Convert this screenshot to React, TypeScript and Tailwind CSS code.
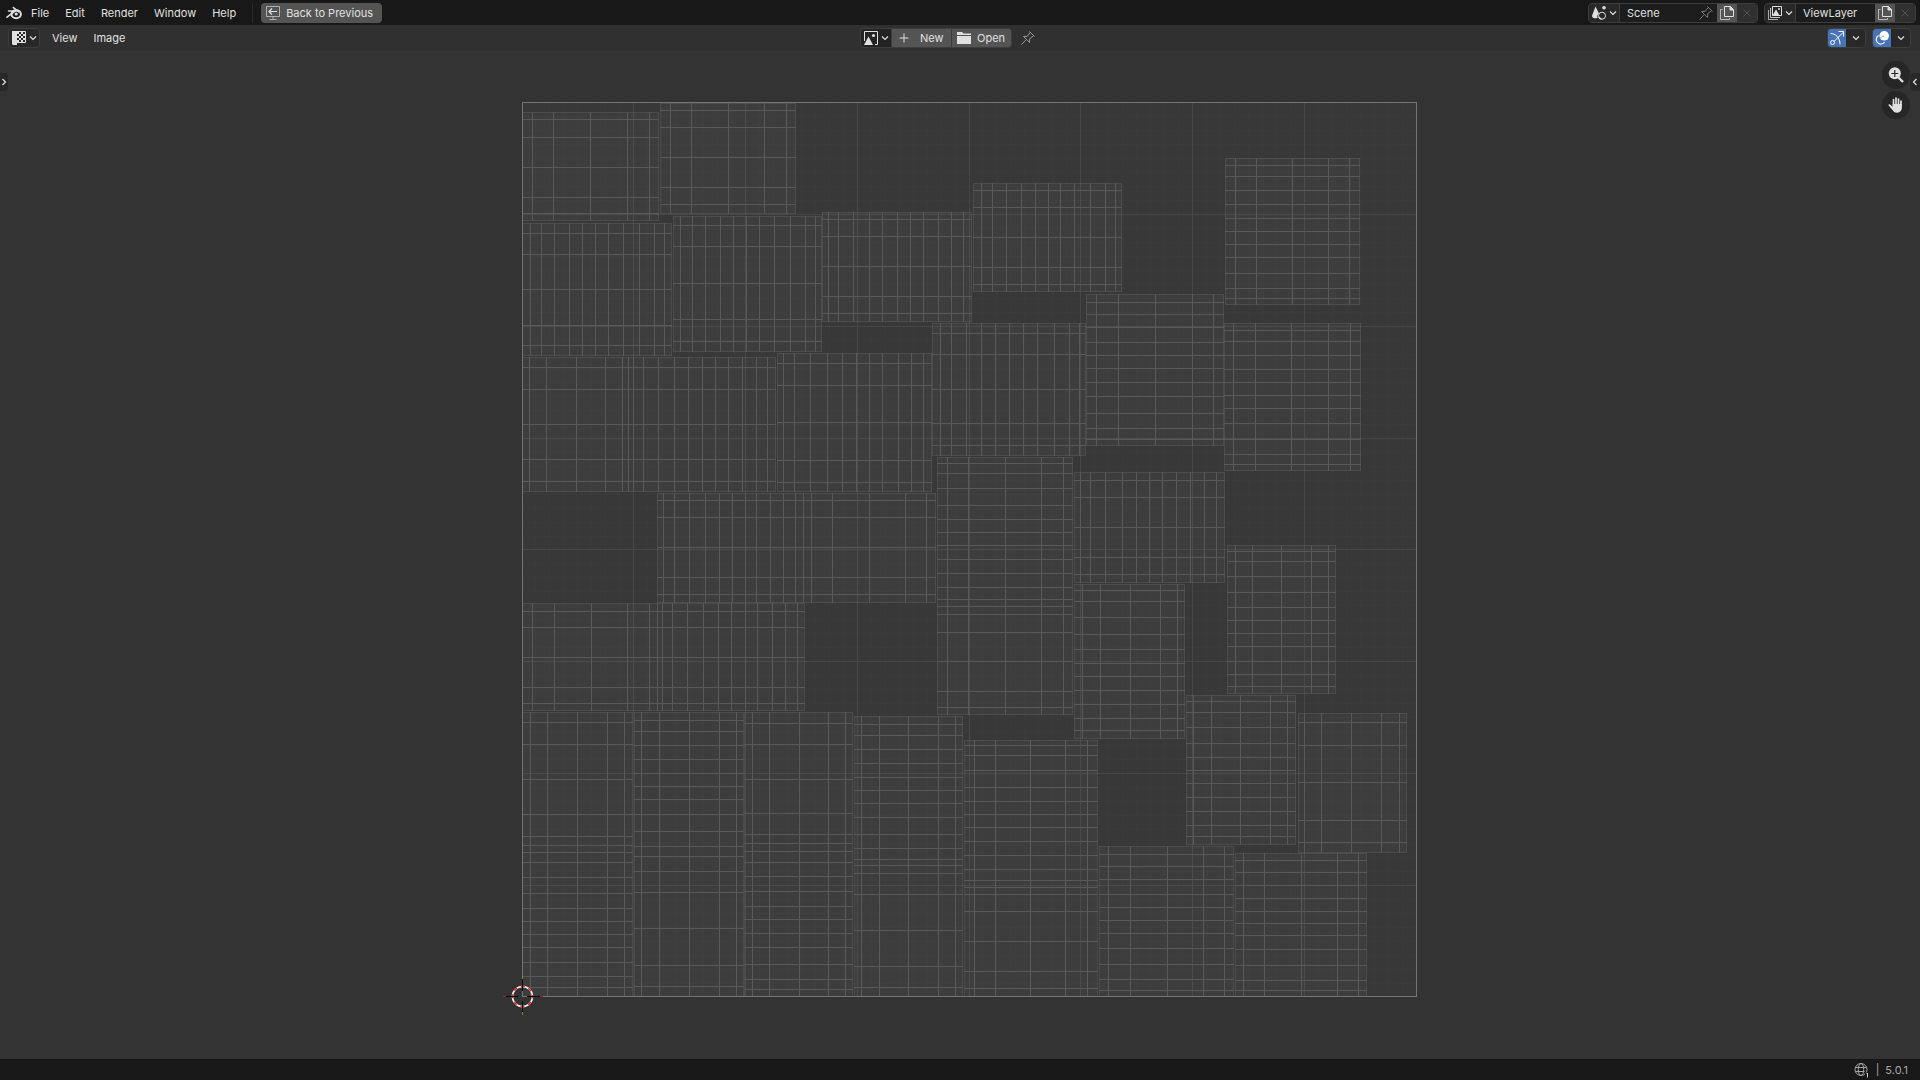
import React from "react";

type Island = {
  box: [number, number, number, number];
  xs: number[];
  ys: number[];
};

// box is left, top, right, bottom; xs and ys are the inner edge loops
const islands: Island[] = [
  { box: [522, 112, 658, 220], xs: [532, 553, 590, 627, 649], ys: [119, 137, 167, 197, 213] },
  { box: [660, 103, 795, 213], xs: [670, 691, 728, 764, 786], ys: [110, 127, 157, 187, 204] },
  { box: [522, 223, 671, 355], xs: [530, 541, 554, 569, 582, 595, 608, 623, 639, 654, 664], ys: [233, 254, 289, 325, 345] },
  { box: [673, 216, 821, 351], xs: [680, 692, 705, 720, 733, 746, 759, 774, 790, 805, 815], ys: [225, 246, 283, 319, 341] },
  { box: [822, 212, 971, 321], xs: [828, 838, 853, 869, 882, 897, 910, 923, 938, 951, 963], ys: [219, 236, 266, 296, 313] },
  { box: [973, 183, 1121, 291], xs: [981, 992, 1006, 1021, 1035, 1048, 1060, 1074, 1090, 1105, 1115], ys: [190, 207, 237, 267, 284] },
  { box: [1225, 158, 1359, 304], xs: [1235, 1256, 1292, 1328, 1349], ys: [165, 176, 190, 204, 218, 231, 244, 257, 273, 288, 298] },
  { box: [1086, 294, 1223, 445], xs: [1096, 1118, 1155, 1192, 1213], ys: [302, 314, 327, 342, 355, 368, 382, 396, 413, 428, 439] },
  { box: [1224, 323, 1360, 470], xs: [1233, 1255, 1291, 1328, 1350], ys: [330, 341, 355, 369, 382, 395, 408, 423, 439, 454, 464] },
  { box: [932, 323, 1085, 455], xs: [940, 951, 966, 981, 995, 1009, 1023, 1037, 1054, 1069, 1079], ys: [333, 354, 389, 423, 445] },
  { box: [937, 457, 1072, 714], xs: [947, 968, 1005, 1041, 1063], ys: [463, 473, 488, 505, 519, 532, 545, 559, 573, 587, 599, 606, 614, 632, 661, 691, 707] },
  { box: [1074, 472, 1224, 582], xs: [1080, 1090, 1105, 1122, 1136, 1149, 1162, 1176, 1190, 1204, 1216], ys: [480, 497, 527, 557, 574] },
  { box: [1074, 584, 1184, 738], xs: [1082, 1100, 1130, 1160, 1177], ys: [590, 601, 617, 634, 649, 663, 676, 690, 704, 718, 730] },
  { box: [1227, 545, 1335, 693], xs: [1235, 1252, 1281, 1311, 1328], ys: [551, 561, 576, 592, 607, 620, 633, 646, 661, 674, 686] },
  { box: [1186, 695, 1295, 844], xs: [1193, 1211, 1240, 1270, 1287], ys: [701, 712, 727, 743, 757, 770, 783, 797, 811, 825, 836] },
  { box: [1298, 713, 1406, 852], xs: [1304, 1321, 1351, 1381, 1399], ys: [722, 745, 782, 820, 842] },
  { box: [522, 357, 775, 491], xs: [529, 546, 576, 605, 622, 628, 633, 643, 658, 674, 688, 702, 715, 728, 742, 756, 767], ys: [367, 389, 424, 459, 481] },
  { box: [777, 353, 931, 491], xs: [783, 794, 810, 827, 842, 856, 869, 882, 898, 911, 923], ys: [363, 385, 422, 460, 482] },
  { box: [657, 493, 935, 602], xs: [663, 674, 689, 705, 719, 732, 745, 756, 770, 783, 795, 803, 811, 832, 869, 905, 926], ys: [500, 517, 547, 577, 594] },
  { box: [522, 603, 804, 710], xs: [532, 554, 591, 627, 649, 657, 662, 672, 687, 703, 718, 731, 745, 757, 772, 785, 797], ys: [611, 627, 657, 687, 703] },
  { box: [522, 712, 632, 996], xs: [530, 547, 577, 607, 624], ys: [722, 744, 779, 814, 836, 845, 852, 862, 877, 893, 908, 921, 934, 947, 962, 976, 987] },
  { box: [634, 712, 743, 996], xs: [641, 659, 689, 719, 736], ys: [720, 731, 745, 759, 773, 786, 799, 814, 831, 846, 856, 871, 892, 928, 965, 986] },
  { box: [744, 712, 852, 996], xs: [752, 769, 799, 828, 845], ys: [723, 744, 779, 813, 834, 843, 851, 862, 876, 891, 906, 919, 933, 947, 964, 979, 989] },
  { box: [854, 716, 962, 996], xs: [861, 879, 908, 938, 955], ys: [724, 735, 749, 763, 777, 790, 803, 817, 834, 848, 859, 865, 873, 894, 930, 966, 987] },
  { box: [964, 740, 1097, 996], xs: [974, 995, 1030, 1065, 1087], ys: [745, 755, 770, 787, 801, 814, 827, 841, 855, 869, 880, 887, 894, 911, 941, 971, 988] },
  { box: [1099, 846, 1233, 996], xs: [1108, 1130, 1167, 1203, 1224], ys: [854, 866, 879, 894, 907, 920, 933, 948, 964, 979, 990] },
  { box: [1235, 853, 1366, 996], xs: [1243, 1264, 1301, 1337, 1358], ys: [860, 872, 885, 898, 911, 923, 935, 949, 965, 980, 990] },
];

const LEFT = 522;
const TOP = 102;
const SIZE = 894;

const gridPath = (parts: number, skip: number) => {
  let d = "";
  for (let i = 1; i < parts; i++) {
    if (skip && i % skip === 0) continue;
    const step = (SIZE / parts) * i;
    d += `M${LEFT + Math.floor(step) + 0.5} ${TOP}v${SIZE}`;
    d += `M${LEFT} ${TOP + Math.ceil(step) + 0.5}h${SIZE}`;
  }
  return d;
};

const loopPath = ({ box, xs, ys }: Island) => {
  const [l, t, r, b] = box;
  return (
    xs.map((x) => `M${x + 0.5} ${t}V${b + 1}`).join("") +
    ys.map((y) => `M${l} ${y + 0.5}H${r + 1}`).join("")
  );
};

const UVCanvas = () => (
  <svg
    className="block h-full w-full"
    viewBox="0 51 1920 1008"
    role="img"
    aria-label="UV layout"
  >
    <rect x={LEFT} y={TOP} width={SIZE} height={SIZE} fill="#383838" />
    <g fill="none" shapeRendering="crispEdges">
      {islands.map(({ box: [l, t, r, b] }, i) => (
        <rect
          key={i}
          x={l + 0.5}
          y={t + 0.5}
          width={r - l}
          height={b - t}
          fill="#3d3d3d"
          stroke="#4c4c4c"
        />
      ))}
      <path d={gridPath(64, 8)} stroke="#fff" strokeOpacity="0.012" />
      <path d={gridPath(8, 0)} stroke="#fff" strokeOpacity="0.075" />
      <path d={islands.map(loopPath).join("")} stroke="#595959" />
      <rect x={LEFT + 0.5} y={TOP + 0.5} width={SIZE} height={SIZE} stroke="#747474" />
    </g>
    <g fill="none">
      <circle cx="522.5" cy="996.5" r="10" stroke="#f4f4f4" strokeWidth="1.6" />
      <circle
        cx="522.5"
        cy="996.5"
        r="10"
        stroke="#e0242e"
        strokeWidth="1.6"
        strokeDasharray="3.93 3.93"
        strokeDashoffset="2"
      />
      <path d="M506 996.5h12M527 996.5h13M522.5 979v12M522.5 1001v11" stroke="#000" />
      <path d="M503 996.5h3M540 996.5h3" stroke="#a3222c" />
      <path d="M522.5 976v3M522.5 1012v3" stroke="#7d9130" />
    </g>
  </svg>
);

const Icon = ({ children, className = "" }: { children: React.ReactNode; className?: string }) => (
  <svg
    className={`h-[14px] w-[14px] shrink-0 ${className}`}
    viewBox="1 1 14 14"
    fill="none"
    stroke="currentColor"
    aria-hidden="true"
  >
    {children}
  </svg>
);

const LargeIcon = ({ children }: { children: React.ReactNode }) => (
  <svg className="h-4 w-4 shrink-0" viewBox="0 0 16 16" fill="none" stroke="currentColor" aria-hidden="true">
    {children}
  </svg>
);

const Chevron = () => (
  <svg className="h-2 w-2 shrink-0" viewBox="0 0 8 8" fill="none" stroke="currentColor" aria-hidden="true">
    <path d="M1 2.5l3 3 3-3" strokeWidth="1.2" />
  </svg>
);

const BlenderLogo = () => (
  <LargeIcon>
    <ellipse cx="10.2" cy="9.2" rx="4.7" ry="4" strokeWidth="2" />
    <circle cx="10.2" cy="9" r="1.6" fill="currentColor" stroke="none" />
    <path d="M1 12.2L9.6 5.6M2.6 6h7.6M7.4 2.6l5.4 4.2" strokeWidth="1.6" strokeLinecap="round" />
  </LargeIcon>
);

const BackIcon = () => (
  <Icon>
    <path d="M1.5 1.5h13v10h-13zM8 11.5v2.5M4.5 14.5h7" strokeOpacity="0.65" />
    <path d="M12 6.5H4M7 3.5l-3 3 3 3" strokeWidth="1.2" />
  </Icon>
);

const ImageEditorIcon = () => (
  <Icon>
    <path d="M1 1h5v14H2.500A1.500 1.500 0 0 1 1 13.500z" fill="currentColor" stroke="none" />
    <path d="M6 1.5h8.500v11H6" />
    <path
      d="M6 2h2v2H6zM10 2h2v2h-2zM8 4h2v2H8zM12 4h2v2h-2zM6 6h2v2H6zM10 6h2v2h-2zM8 8h2v2H8zM12 8h2v2h-2zM6 10h2v2H6zM10 10h2v2h-2z"
      fill="currentColor"
      stroke="none"
    />
  </Icon>
);

const PictureIcon = () => (
  <Icon>
    <path d="M1.500 11V1.500h13v13H12" />
    <path d="M1 15l4.500-8.500L10 15z" fill="currentColor" stroke="none" />
    <circle cx="10.500" cy="5.500" r="1.500" fill="currentColor" stroke="none" />
  </Icon>
);

const PinIcon = () => (
  <Icon>
    <path d="M9.500 1.500l5 5M10.300 2.300L7.300 6.300 3.500 6.500l6 6 .2-3.800 4-3M6.300 9.500L1.500 14.500" />
  </Icon>
);

const CopyIcon = () => (
  <Icon>
    <path d="M5.500 1.500h6l3 3v7h-9z" />
    <path d="M11 1.500V5h3.500z" fill="currentColor" />
    <path d="M3.500 4.500h-2v10h9v-1.500" strokeOpacity="0.7" />
  </Icon>
);

const CloseIcon = () => (
  <Icon className="text-[#505050]">
    <path d="M4.500 4.500l7 7M11.500 4.500l-7 7" />
  </Icon>
);

const SceneIcon = () => (
  <Icon>
    <path d="M4.500 1.500L8 8.500c-1.500 1-2 2.500-1.500 4.600C3.500 13.800 1 13 1 10.800z" fill="currentColor" stroke="none" />
    <circle cx="13" cy="2.800" r="1.800" fill="currentColor" stroke="none" />
    <circle cx="11" cy="10.700" r="3.500" />
    <path d="M8 12a3 3 0 0 0 2.500 2" strokeWidth="1.500" />
  </Icon>
);

const ViewLayerIcon = () => (
  <Icon>
    <path d="M5.500 1.500h9v9h-9z" />
    <path d="M5.500 10.500l3.500-6 3.500 6z" fill="currentColor" stroke="none" />
    <circle cx="12" cy="4" r="1" fill="currentColor" stroke="none" />
    <path d="M3.500 3v9.500H13" strokeOpacity="0.85" />
    <path d="M1.500 5v9.500H11" strokeOpacity="0.7" />
  </Icon>
);

const GizmoIcon = () => (
  <Icon>
    <path d="M1.500 3.500c5 0 9.500 4 9.500 11" />
    <path d="M5 11.500L14 2.500M9.500 1.500h5v5" />
    <circle cx="3.500" cy="12.500" r="2" />
  </Icon>
);

const OverlayIcon = () => (
  <Icon>
    <circle cx="10.200" cy="5.800" r="4.800" fill="currentColor" stroke="none" />
    <path d="M4.500 5.500a4.600 4.600 0 1 0 6.200 6.500" strokeWidth="1.200" />
    <path d="M6 10.500a4.600 4.600 0 0 1 3-4.500l1.500 1" stroke="#4772b3" strokeDasharray="1.500 1" />
  </Icon>
);

const ZoomIcon = () => (
  <LargeIcon>
    <circle cx="6.800" cy="6.300" r="6" fill="currentColor" stroke="none" />
    <path d="M10.500 10.500l4.500 4.500" strokeWidth="2.400" />
    <path d="M6.800 3v7M3.300 6.500h7" stroke="#262626" strokeWidth="1.200" />
  </LargeIcon>
);

const HandIcon = () => (
  <LargeIcon>
    <path d="M5.500 8V2.500M8 7.500V1M10.500 7.500V2M13 8.500V4" strokeWidth="1.700" strokeLinecap="round" />
    <path
      d="M4.600 7h9.300v3.500c0 3-2 5.200-4.800 5.200-2.300 0-3.600-1-4.800-2.900L.6 8.600c-.4-.9.900-1.700 1.700-.9l2.300 2.100z"
      fill="currentColor"
      stroke="none"
    />
  </LargeIcon>
);

const GlobeIcon = () => (
  <LargeIcon>
    <circle cx="7" cy="7.500" r="6" />
    <ellipse cx="7" cy="7.500" rx="2.700" ry="6" />
    <path d="M1.500 5.500h11M1.500 9.500h9" />
    <path d="M11 10.500h5V16h-5z" fill="#181818" stroke="none" />
    <path d="M12.500 12l1-1v4.500" stroke="#d0d0d0" />
  </LargeIcon>
);

const menus = ["File", "Edit", "Render", "Window", "Help"];

const DataBlock = ({
  label,
  value,
  icon,
  pin,
}: {
  label: string;
  value: string;
  icon: React.ReactNode;
  pin?: boolean;
}) => (
  <div className="flex h-5 items-stretch overflow-hidden rounded border border-[#3d3d3d] bg-[#1d1d1d]">
    <button
      type="button"
      aria-label={`Browse ${label}`}
      className="flex w-[31px] items-center justify-center gap-[3px] border-r border-[#3d3d3d] bg-[#282828]"
    >
      {icon}
      <Chevron />
    </button>
    <input
      aria-label={label}
      defaultValue={value}
      className="w-[79px] bg-transparent pl-[7px] outline-none"
    />
    {pin && (
      <button type="button" aria-label="Pin scene" className="mr-1 flex items-center text-[#7a7a7a]">
        <PinIcon />
      </button>
    )}
    <button type="button" aria-label={`New ${label}`} className="flex w-5 items-center justify-center bg-[#545454]">
      <CopyIcon />
    </button>
    <button type="button" aria-label={`Remove ${label}`} className="flex w-5 items-center justify-center bg-[#303030]">
      <CloseIcon />
    </button>
  </div>
);

const ToggleGroup = ({ label, icon }: { label: string; icon: React.ReactNode }) => (
  <div className="flex h-5 items-stretch overflow-hidden rounded border border-[#3d3d3d] bg-[#282828]">
    <button type="button" aria-pressed="true" aria-label={label} className="flex w-[18px] items-center justify-center bg-[#4772b3] text-white">
      {icon}
    </button>
    <button type="button" aria-label={`${label} options`} className="flex w-[19px] items-center justify-center">
      <Chevron />
    </button>
  </div>
);

const App = () => {
  return (
    <div className="flex h-screen flex-col overflow-hidden bg-[#333333] font-['Inter','Noto_Sans',sans-serif] text-[11px] leading-4 text-[#e0e0e0]">
      <nav className="flex h-[25px] shrink-0 items-center justify-between bg-[#181818] pl-[6px] pr-1">
        <div className="flex items-center">
          <button type="button" aria-label="Blender" className="mr-[9px]">
            <BlenderLogo />
          </button>
          <div className="flex items-center gap-4">
            {menus.map((item) => (
              <button type="button" key={item}>
                {item}
              </button>
            ))}
          </div>
          <div className="ml-4 mr-2 h-5 w-px bg-[#2b2b2b]" />
          <button type="button" className="flex h-5 items-center gap-[6px] rounded bg-[#545454] pl-[5px] pr-[9px]">
            <BackIcon />
            Back to Previous
          </button>
        </div>
        <div className="flex items-center gap-[6px]">
          <DataBlock label="Scene" value="Scene" icon={<SceneIcon />} pin />
          <DataBlock label="View layer" value="ViewLayer" icon={<ViewLayerIcon />} />
        </div>
      </nav>

      <header className="flex h-[26px] shrink-0 items-center bg-[#303030] pl-2 pr-[9px]">
        <div className="flex flex-1 items-center">
          <button
            type="button"
            aria-label="Editor type"
            className="mr-3 flex h-5 w-8 items-center justify-center gap-[3px] rounded border border-[#3d3d3d] bg-[#282828]"
          >
            <ImageEditorIcon />
            <Chevron />
          </button>
          <div className="flex items-center gap-4">
            <button type="button">View</button>
            <button type="button">Image</button>
          </div>
        </div>

        <div className="flex items-center pr-6">
          <div className="flex h-5 items-stretch gap-px overflow-hidden rounded border border-[#3d3d3d] bg-[#3d3d3d]">
            <button type="button" aria-label="Browse image" className="flex w-[30px] items-center justify-center gap-[3px] bg-[#232323]">
              <PictureIcon />
              <Chevron />
            </button>
            <button type="button" className="flex w-[59px] items-center gap-[9px] bg-[#545454] pl-[5px]">
              <Icon>
                <path d="M8 3.500v9M3.500 8h9" />
              </Icon>
              New
            </button>
            <button type="button" className="flex w-[59px] items-center gap-[6px] bg-[#545454] pl-[5px]">
              <svg className="h-[14px] w-[14px] shrink-0" viewBox="0 0 14 14" fill="currentColor" aria-hidden="true">
                <path d="M0 1h5l1.500 1.500H14V4H0zM0 5h14v8H0z" />
              </svg>
              Open
            </button>
          </div>
          <button type="button" aria-label="Pin image" className="ml-[9px] text-[#9a9a9a]">
            <PinIcon />
          </button>
        </div>

        <div className="flex flex-1 items-center justify-end gap-[6px]">
          <ToggleGroup label="Show gizmos" icon={<GizmoIcon />} />
          <ToggleGroup label="Show overlays" icon={<OverlayIcon />} />
        </div>
      </header>

      <main className="relative min-h-0 flex-1">
        <UVCanvas />
        <button
          type="button"
          aria-label="Show toolbar"
          className="absolute left-0 top-[22px] flex h-[18px] w-2 items-center justify-center rounded-r bg-[#282828]"
        >
          <span className="-rotate-90">
            <Chevron />
          </span>
        </button>
        <button
          type="button"
          aria-label="Show sidebar"
          className="absolute right-0 top-[22px] flex h-[18px] w-[10px] items-center justify-center rounded-l bg-[#282828]"
        >
          <span className="rotate-90">
            <Chevron />
          </span>
        </button>
        <div className="absolute right-[10px] top-[10px] flex flex-col gap-[2px]">
          <button type="button" aria-label="Zoom" className="flex h-7 w-7 items-center justify-center rounded-full bg-[#262626]">
            <ZoomIcon />
          </button>
          <button type="button" aria-label="Pan" className="flex h-7 w-7 items-center justify-center rounded-full bg-[#262626]">
            <HandIcon />
          </button>
        </div>
      </main>

      <footer className="flex h-[21px] shrink-0 items-center justify-end gap-[6px] bg-[#181818] pr-3 text-[#a6a6a6]">
        <GlobeIcon />
        <span>|</span>
        <span>5.0.1</span>
      </footer>
    </div>
  );
};

export default App;
